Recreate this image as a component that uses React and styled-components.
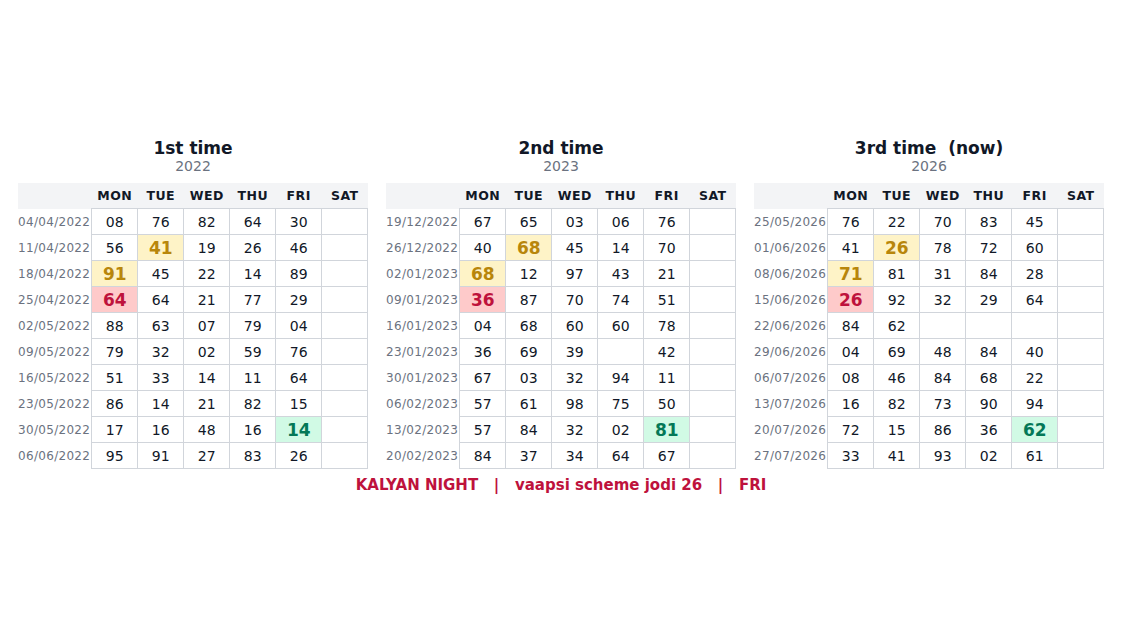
import styled, { createGlobalStyle } from 'styled-components';

const GlobalStyle = createGlobalStyle`
  body {
    margin: 0;
    background: #ffffff;
    font-family: 'DejaVu Sans', 'Liberation Sans', sans-serif;
  }
`;

const Page = styled.div`
  min-height: 632px;
  display: flex;
  flex-direction: column;
  justify-content: center;
  align-items: center;
  padding: 0 18px;
  box-sizing: border-box;
`;

const Panels = styled.div`
  display: flex;
  gap: 18px;
`;

const Panel = styled.div`
  width: 350px;
  display: flex;
  flex-direction: column;
  align-items: center;
`;

const Title = styled.div`
  font-size: 17px;
  font-weight: 700;
  color: #111827;
  line-height: 20px;
  white-space: pre;
`;

const Year = styled.div`
  font-size: 14px;
  color: #6b7280;
  line-height: 17px;
  margin-bottom: 8px;
`;

const Table = styled.table`
  width: 350px;
  border-collapse: collapse;
  table-layout: fixed;
`;

const HeadRow = styled.tr`
  background: #f3f4f6;
  height: 26px;
`;

const Th = styled.th`
  width: ${(p) => (p.$date ? '74px' : '46px')};
  padding: 0;
  font-size: 12.5px;
  font-weight: 700;
  letter-spacing: 0.5px;
  color: #111827;
  text-align: center;
`;

const Row = styled.tr`
  height: 26px;
`;

const DateCell = styled.td`
  padding: 0 1px 0 0;
  font-size: 12px;
  letter-spacing: 0.3px;
  color: #6b7280;
  text-align: right;
  white-space: nowrap;
`;

const tones = {
  yellow: { bg: '#fef3c7', fg: '#b8860b' },
  red: { bg: '#fecaca', fg: '#be123c' },
  green: { bg: '#d1fae5', fg: '#047857' },
};

const Cell = styled.td`
  padding: 0;
  border: 1px solid #d1d5db;
  text-align: center;
  font-size: ${(p) => (p.$tone ? '17px' : '14px')};
  font-weight: ${(p) => (p.$tone ? 700 : 400)};
  color: ${(p) => (p.$tone ? tones[p.$tone].fg : '#111827')};
  background: ${(p) => (p.$tone ? tones[p.$tone].bg : '#ffffff')};
`;

const Footer = styled.div`
  margin-top: 7px;
  font-size: 15px;
  font-weight: 700;
  color: #be123c;
  white-space: pre;
  line-height: 18px;
`;

const days = ['MON', 'TUE', 'WED', 'THU', 'FRI', 'SAT'];

const panels = [
  {
    title: '1st time',
    year: '2022',
    rows: [
      ['04/04/2022', ['08', '76', '82', '64', '30', '']],
      ['11/04/2022', ['56', '41', '19', '26', '46', '']],
      ['18/04/2022', ['91', '45', '22', '14', '89', '']],
      ['25/04/2022', ['64', '64', '21', '77', '29', '']],
      ['02/05/2022', ['88', '63', '07', '79', '04', '']],
      ['09/05/2022', ['79', '32', '02', '59', '76', '']],
      ['16/05/2022', ['51', '33', '14', '11', '64', '']],
      ['23/05/2022', ['86', '14', '21', '82', '15', '']],
      ['30/05/2022', ['17', '16', '48', '16', '14', '']],
      ['06/06/2022', ['95', '91', '27', '83', '26', '']],
    ],
  },
  {
    title: '2nd time',
    year: '2023',
    rows: [
      ['19/12/2022', ['67', '65', '03', '06', '76', '']],
      ['26/12/2022', ['40', '68', '45', '14', '70', '']],
      ['02/01/2023', ['68', '12', '97', '43', '21', '']],
      ['09/01/2023', ['36', '87', '70', '74', '51', '']],
      ['16/01/2023', ['04', '68', '60', '60', '78', '']],
      ['23/01/2023', ['36', '69', '39', '', '42', '']],
      ['30/01/2023', ['67', '03', '32', '94', '11', '']],
      ['06/02/2023', ['57', '61', '98', '75', '50', '']],
      ['13/02/2023', ['57', '84', '32', '02', '81', '']],
      ['20/02/2023', ['84', '37', '34', '64', '67', '']],
    ],
  },
  {
    title: '3rd time  (now)',
    year: '2026',
    rows: [
      ['25/05/2026', ['76', '22', '70', '83', '45', '']],
      ['01/06/2026', ['41', '26', '78', '72', '60', '']],
      ['08/06/2026', ['71', '81', '31', '84', '28', '']],
      ['15/06/2026', ['26', '92', '32', '29', '64', '']],
      ['22/06/2026', ['84', '62', '', '', '', '']],
      ['29/06/2026', ['04', '69', '48', '84', '40', '']],
      ['06/07/2026', ['08', '46', '84', '68', '22', '']],
      ['13/07/2026', ['16', '82', '73', '90', '94', '']],
      ['20/07/2026', ['72', '15', '86', '36', '62', '']],
      ['27/07/2026', ['33', '41', '93', '02', '61', '']],
    ],
  },
];

// same highlight pattern in every panel: row, column -> tone
const highlight = (r, c) => {
  if (r === 1 && c === 1) return 'yellow';
  if (r === 2 && c === 0) return 'yellow';
  if (r === 3 && c === 0) return 'red';
  if (r === 8 && c === 4) return 'green';
  return undefined;
};

const App = () => (
  <>
    <GlobalStyle />
    <Page>
      <Panels>
        {panels.map((panel) => (
          <Panel key={panel.title}>
            <Title>{panel.title}</Title>
            <Year>{panel.year}</Year>
            <Table>
              <thead>
                <HeadRow>
                  <Th $date />
                  {days.map((d) => (
                    <Th key={d}>{d}</Th>
                  ))}
                </HeadRow>
              </thead>
              <tbody>
                {panel.rows.map(([date, nums], r) => (
                  <Row key={date}>
                    <DateCell>{date}</DateCell>
                    {nums.map((n, c) => (
                      <Cell key={c} $tone={highlight(r, c)}>{n}</Cell>
                    ))}
                  </Row>
                ))}
              </tbody>
            </Table>
          </Panel>
        ))}
      </Panels>
      <Footer>KALYAN NIGHT   |   vaapsi scheme jodi 26   |   FRI</Footer>
    </Page>
  </>
);

export default App;
